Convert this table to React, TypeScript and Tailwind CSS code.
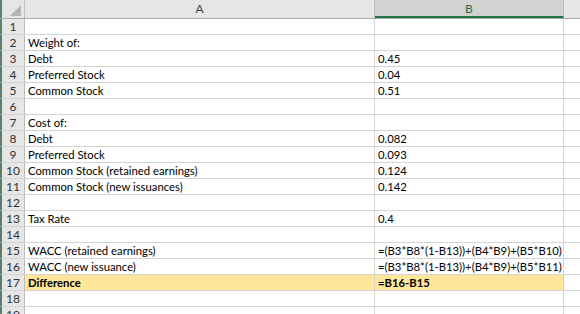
import React from 'react';

const rows: { a?: string; b?: string; bold?: boolean; hl?: boolean }[] = [
  {},
  { a: 'Weight of:' },
  { a: 'Debt', b: '0.45' },
  { a: 'Preferred Stock', b: '0.04' },
  { a: 'Common Stock', b: '0.51' },
  {},
  { a: 'Cost of:' },
  { a: 'Debt', b: '0.082' },
  { a: 'Preferred Stock', b: '0.093' },
  { a: 'Common Stock (retained earnings)', b: '0.124' },
  { a: 'Common Stock (new issuances)', b: '0.142' },
  {},
  { a: 'Tax Rate', b: '0.4' },
  {},
  { a: 'WACC (retained earnings)', b: '=(B3*B8*(1-B13))+(B4*B9)+(B5*B10)' },
  { a: 'WACC (new issuance)', b: '=(B3*B8*(1-B13))+(B4*B9)+(B5*B11)' },
  { a: 'Difference', b: '=B16-B15', bold: true, hl: true },
  {},
  {},
];

const App = () => {
  return (
    <div className="h-[314px] w-[580px] overflow-hidden bg-white text-[11.3px] leading-none text-black" style={{ fontFamily: 'Lato, "Open Sans", sans-serif' }}>
      <div className="flex h-[19px] border-b border-[#ababab] bg-[#e6e6e6]">
        <div className="relative w-[25px] shrink-0 border-l-2 border-r border-l-[#5f7f6c] border-r-[#bdbdbd]">
          <div className="absolute bottom-[2px] right-[3px] h-0 w-0 border-b-[11px] border-l-[11px] border-b-[#b4b4b4] border-l-transparent" />
        </div>
        <div className="flex w-[350px] shrink-0 items-center justify-center border-r border-[#bdbdbd] text-[12px] text-[#444]">A</div>
        <div className="flex w-[189px] shrink-0 items-center justify-center border-b-2 border-r border-b-[#217346] border-r-[#bdbdbd] bg-[#d2d2d2] pt-[2px] text-[12px] text-[#2f6a47]">B</div>
        <div className="flex-1" />
      </div>
      {rows.map((r, i) => (
        <div key={i} className="flex h-[16px]">
          <div className="flex w-[25px] shrink-0 items-center justify-center border-b border-l-2 border-r border-b-[#d4d4d4] border-l-[#5f7f6c] border-r-[#bdbdbd] bg-[#e6e6e6] text-[12px] text-[#333]">
            {i + 1}
          </div>
          <div className={`flex w-[350px] shrink-0 items-center overflow-hidden whitespace-nowrap border-b border-r border-[#d4d4d4] pl-[3px] ${r.hl ? 'bg-[#ffe699]' : ''} ${r.bold ? 'font-bold' : ''}`}>
            {r.a}
          </div>
          <div className={`flex w-[189px] shrink-0 items-center overflow-hidden whitespace-nowrap border-b border-r border-[#d4d4d4] pl-[3px] ${r.hl ? 'bg-[#ffe699]' : ''} ${r.bold ? 'font-bold' : ''}`}>
            {r.b}
          </div>
          <div className="flex-1 border-b border-[#d4d4d4]" />
        </div>
      ))}
    </div>
  );
};

export default App;
